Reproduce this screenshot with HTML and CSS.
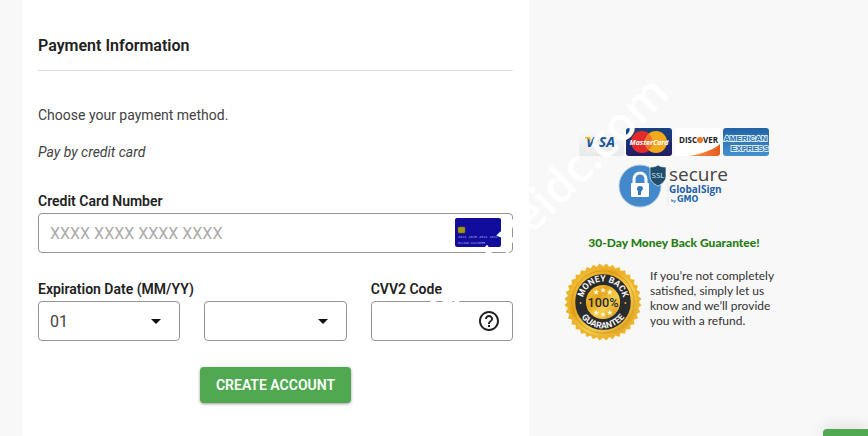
FILE: index.html
```html
<!DOCTYPE html>
<html lang="en">
<head>
    <meta charset="UTF-8">
    <meta name="viewport" content="width=device-width, initial-scale=1.0">
    <title>Payment Information</title>
    <link rel="stylesheet" href="styles.css">
</head>
<body>
    <div class="page">
        <main class="panel">
            <h2 class="title">Payment Information</h2>
            <p class="intro">Choose your payment method.</p>
            <p class="method">Pay by credit card</p>
            <form action="#">
                <div class="field">
                    <label for="number">Credit Card Number</label>
                    <div class="control">
                        <input class="box" id="number" type="text" placeholder="XXXX XXXX XXXX XXXX">
                        <svg class="cardIcon" viewBox="0 0 46 29">
                            <rect width="46" height="29" rx="2" fill="#110c9c"/>
                            <rect x="3" y="9" width="7" height="6" rx="1" fill="#a39a0b" stroke="#6c6520" stroke-width=".5"/>
                            <text class="cardDigits" x="3" y="20" font-size="3.5">4321 4325 4321 4321</text>
                            <text class="cardDigits" x="3" y="26" font-size="3">512345  CUSTOMER</text>
                        </svg>
                    </div>
                </div>
                <div class="row">
                    <div class="field">
                        <label for="month">Expiration Date (MM/YY)</label>
                        <div class="control">
                            <select class="box" id="month">
                                <option>01</option>
                                <option>02</option>
                                <option>03</option>
                            </select>
                            <svg class="arrow" viewBox="0 0 10 5"><path d="M0 0h10L5 5z" fill="#111"/></svg>
                        </div>
                    </div>
                    <div class="field">
                        <div class="control">
                            <select class="box" id="year" aria-label="Expiration year">
                                <option></option>
                            </select>
                            <svg class="arrow" viewBox="0 0 10 5"><path d="M0 0h10L5 5z" fill="#111"/></svg>
                        </div>
                    </div>
                    <div class="field">
                        <label for="cvv">CVV2 Code</label>
                        <div class="control">
                            <input class="box" id="cvv" type="text">
                            <svg class="help" viewBox="2 2 20 20"><path fill="#212121" d="M11 18h2v-2h-2v2zm1-16C6.48 2 2 6.480 2 12s4.480 10 10 10 10-4.480 10-10S17.520 2 12 2zm0 18c-4.410 0-8-3.590-8-8s3.590-8 8-8 8 3.590 8 8-3.590 8-8 8zm0-14c-2.210 0-4 1.790-4 4h2c0-1.100.9-2 2-2s2 .9 2 2c0 2-3 1.750-3 5h2c0-2.250 3-2.500 3-5 0-2.210-1.790-4-4-4z"/></svg>
                        </div>
                    </div>
                </div>
                <button class="submit" type="submit">CREATE ACCOUNT</button>
            </form>
        </main>
        <aside class="side">
            <svg class="cards" viewBox="0 0 192 29">
                <defs>
                    <linearGradient id="pale" x2="0" y2="1"><stop stop-color="#fafafa"/><stop offset="1" stop-color="#e9e9e9"/></linearGradient>
                    <linearGradient id="navy" x2="0" y2="1"><stop stop-color="#174383"/><stop offset="1" stop-color="#211d62"/></linearGradient>
                    <linearGradient id="blue" x2="0" y2="1"><stop stop-color="#2164a5"/><stop offset="1" stop-color="#4690cd"/></linearGradient>
                    <linearGradient id="orange"><stop stop-color="#f59a4e"/><stop offset="1" stop-color="#e65a1c"/></linearGradient>
                </defs>
                <rect x="1" y="1" width="45" height="27" rx="3" fill="url(#pale)"/>
                <text class="visa" x="8" y="19">VISA</text>
                <path d="M7 9h5l2 6c-1-3-3-4-7-5z" fill="#f3b51b"/>
                <rect x="48" y="0" width="46" height="28" rx="3" fill="url(#navy)"/>
                <circle cx="64" cy="14" r="11" fill="#e32b2b"/>
                <circle cx="78" cy="14" r="11" fill="#f2aa1c"/>
                <path d="M71 6a11 11 0 0 0 0 16a11 11 0 0 0 0-16" fill="#ef732b"/>
                <text class="master" x="71" y="17" text-anchor="middle">MasterCard</text>
                <rect x="97" y="0" width="45" height="28" rx="3" fill="#fff"/>
                <path d="M111 28c12-2 24-6 31-12v9q0 3-3 3z" fill="url(#orange)"/>
                <text class="discover" x="101" y="15">DISC</text>
                <circle cx="122" cy="12" r="3" fill="#ea7929"/>
                <text class="discover" x="125" y="15">VER</text>
                <rect x="145" y="0" width="46" height="28" rx="3" fill="url(#blue)"/>
                <text class="amex" x="146" y="13">AMERICAN</text>
                <text class="amex" x="153" y="23">EXPRESS</text>
            </svg>
            <svg class="secure" viewBox="0 0 112 44">
                <circle cx="22" cy="22" r="21" fill="#4388cb" stroke="#b3cfdc"/>
                <path d="M16 20v-5a6 6 0 0 1 12 0v5" fill="none" stroke="#fff" stroke-width="3"/>
                <rect x="13" y="19" width="18" height="14" rx="1" fill="#fff"/>
                <path d="M20 28l-1-3a3 3 0 1 1 6 0l-2 3v3h-3z" fill="#3678bd"/>
                <path d="M40 1c3 2 5 2 8 2v9c0 5-4 8-8 10c-4-2-8-5-8-10V3c3 0 5 0 8-2z" fill="#1f4d6b" stroke="#eef3f5" stroke-width=".7"/>
                <text class="ssl" x="40" y="14" text-anchor="middle">SSL</text>
                <path d="M50 18v24" stroke="#e8e8e8"/>
                <text class="secureText" x="51" y="17">secure</text>
                <text class="globalSign" x="51" y="29">GlobalSign</text>
                <text class="by" x="53" y="38">by</text>
                <text class="gmo" x="59" y="38">GMO</text>
            </svg>
            <h3 class="promise">30-Day Money Back Guarantee!</h3>
            <div class="refund">
                <svg class="seal" viewBox="0 0 80 80">
                    <defs>
                        <linearGradient id="gold" x2="1" y2="1"><stop stop-color="#f9cd45"/><stop offset=".35" stop-color="#e5a51d"/><stop offset=".6" stop-color="#f6cf50"/><stop offset="1" stop-color="#d48f12"/></linearGradient>
                        <rect id="points" x="12" y="12" width="56" height="56"/>
                        <path id="star" d="M0-3L.9-.9L3-.9L1.300.5L1.900 2.600L0 1.300L-1.900 2.600L-1.300.5L-3-.9L-.9-.9z"/>
                        <path id="upper" d="M19 40a21 21 0 0 1 42 0"/>
                        <path id="lower" d="M13 40a27 27 0 0 0 54 0"/>
                    </defs>
                    <g fill="#edb42a">
                        <use href="#points"/>
                        <use href="#points" transform="rotate(10 40 40)"/>
                        <use href="#points" transform="rotate(20 40 40)"/>
                        <use href="#points" transform="rotate(30 40 40)"/>
                        <use href="#points" transform="rotate(40 40 40)"/>
                        <use href="#points" transform="rotate(50 40 40)"/>
                        <use href="#points" transform="rotate(60 40 40)"/>
                        <use href="#points" transform="rotate(70 40 40)"/>
                        <use href="#points" transform="rotate(80 40 40)"/>
                    </g>
                    <circle cx="40" cy="40" r="35" fill="url(#gold)"/>
                    <circle cx="40" cy="40" r="32" fill="none" stroke="#c88a14" stroke-width=".6"/>
                    <circle cx="40" cy="40" r="23" fill="none" stroke="#292b2d" stroke-width="11"/>
                    <circle cx="40" cy="40" r="17" fill="url(#gold)"/>
                    <text class="ring"><textPath href="#upper" startOffset="50%" text-anchor="middle">MONEY BACK</textPath></text>
                    <text class="ring"><textPath href="#lower" startOffset="50%" text-anchor="middle">GUARANTEE</textPath></text>
                    <circle cx="17" cy="41" r="1" fill="#e9b32d"/>
                    <circle cx="63" cy="41" r="1" fill="#e9b32d"/>
                    <g fill="#fff7d8">
                        <use href="#star" x="33" y="30"/>
                        <use href="#star" x="40" y="28"/>
                        <use href="#star" x="47" y="30"/>
                        <use href="#star" x="33" y="51"/>
                        <use href="#star" x="40" y="53"/>
                        <use href="#star" x="47" y="51"/>
                    </g>
                    <text class="percent" x="40" y="45" text-anchor="middle">100%</text>
                </svg>
                <p class="terms">If you’re not completely<br>satisfied, simply let us<br>know and we’ll provide<br>you with a refund.</p>
            </div>
        </aside>
    </div>
    <div class="watermark">www.veidc.com</div>
    <div class="chat"></div>
</body>
</html>
```
FILE: styles.css
```css
* {
    box-sizing: border-box;
}

body {
    margin: 0;
    background: #f8f8f8;
    color: #212121;
    font-family: Roboto, sans-serif;
    font-size: 14px;
    line-height: 20px;
    overflow: hidden;
}

.page {
    display: grid;
    grid-template-columns: 3fr 2fr;
    min-height: 100vh;
    padding: 0 1px 0 22px;
}

.panel {
    padding: 32px 16px;
    background: #fff;
}

.title {
    margin: 0 0 34px;
    padding: 4px 0 14px;
    border-bottom: 1px solid #ddd;
    font-size: 16px;
    font-weight: 600;
}

.intro {
    margin: 0 0 17px;
    color: #424242;
}

.method {
    margin: 0 0 29px;
    color: #424242;
    font-style: italic;
}

.field {
    display: flex;
    flex-direction: column;
    justify-content: flex-end;
    min-width: 0;
}

.field label {
    margin-bottom: 2px;
    font-weight: 600;
    white-space: nowrap;
}

.control {
    position: relative;
}

.box {
    display: block;
    width: 100%;
    height: 40px;
    padding: 0 11px;
    border: 1px solid #949494;
    border-radius: 4px;
    background: #fff;
    color: #424242;
    font-family: inherit;
    font-size: 16px;
    appearance: none;
}

.box::placeholder {
    color: #aaa;
    opacity: 1;
}

.cardIcon {
    position: absolute;
    top: 5px;
    right: 12px;
    width: 46px;
    height: 29px;
}

.cardDigits {
    fill: #aaa8e0;
    font-family: "Liberation Mono", monospace;
}

.arrow {
    position: absolute;
    top: 18px;
    right: 19px;
    width: 10px;
    height: 5px;
    pointer-events: none;
}

.help {
    position: absolute;
    top: 10px;
    right: 14px;
    width: 20px;
    height: 20px;
}

.row {
    display: grid;
    grid-template-columns: repeat(3, 1fr);
    gap: 24px;
    margin: 26px 0;
}

.submit {
    display: block;
    height: 36px;
    margin: 0 auto;
    padding: 0 16px;
    border: 0;
    border-radius: 4px;
    background: #50a951;
    box-shadow: 0 1px 3px rgba(0, 0, 0, .4);
    color: #fff;
    font-family: inherit;
    font-size: 14px;
    font-weight: 600;
}

.side {
    display: flex;
    flex-direction: column;
    align-items: center;
    width: 220px;
    margin-left: 35px;
    padding-top: 128px;
}

.cards {
    width: 192px;
    height: 29px;
}

.visa {
    fill: #1b5599;
    font: italic bold 14px "Open Sans", sans-serif;
}

.master {
    fill: #fff;
    font: italic bold 7px "Open Sans", sans-serif;
}

.discover {
    fill: #222;
    font: bold 8px "Open Sans", sans-serif;
}

.amex {
    fill: #2a6dac;
    stroke: #d7edf9;
    stroke-width: 2px;
    paint-order: stroke;
    font: bold 8px "Liberation Sans", sans-serif;
}

.secure {
    width: 112px;
    height: 44px;
    margin-top: 7px;
    overflow: visible;
}

.ssl {
    fill: #d9e8ee;
    font: 8px "Open Sans", sans-serif;
}

.secureText {
    fill: #444;
    font: 19px "Open Sans", sans-serif;
}

.globalSign {
    fill: #2360a8;
    font: bold 10px "Open Sans", sans-serif;
}

.by {
    fill: #1d66b0;
    font: bold 4px "Open Sans", sans-serif;
}

.gmo {
    fill: #1d66b0;
    font: bold 8px "DejaVu Sans", sans-serif;
}

.promise {
    margin: 25px 0 10px;
    color: #267d13;
    font-family: Lato, sans-serif;
    font-size: 12px;
    font-weight: 900;
    white-space: nowrap;
}

.refund {
    display: flex;
    gap: 8px;
    align-items: center;
    width: 100%;
}

.seal {
    flex: none;
    width: 78px;
    height: 78px;
}

.ring {
    fill: #f2f2f2;
    font: bold 9px Roboto, sans-serif;
}

.percent {
    fill: #292b2d;
    font: 500 13px Roboto, sans-serif;
}

.terms {
    margin: 0 0 8px;
    color: #333;
    font-family: Lato, sans-serif;
    font-size: 12px;
    line-height: 15px;
    white-space: nowrap;
}

/* diagonal stamp over the whole page */
.watermark {
    position: absolute;
    top: 299px;
    left: 429px;
    color: #fff;
    font-family: "Open Sans", sans-serif;
    font-size: 46px;
    font-weight: 600;
    line-height: 1;
    transform: rotate(-45deg);
    transform-origin: 0 100%;
    pointer-events: none;
}

.chat {
    position: fixed;
    right: 0;
    bottom: 0;
    width: 45px;
    height: 7px;
    border-top-left-radius: 4px;
    background: #50a951;
    box-shadow: 0 0 16px rgba(0, 0, 0, .2);
}
```
